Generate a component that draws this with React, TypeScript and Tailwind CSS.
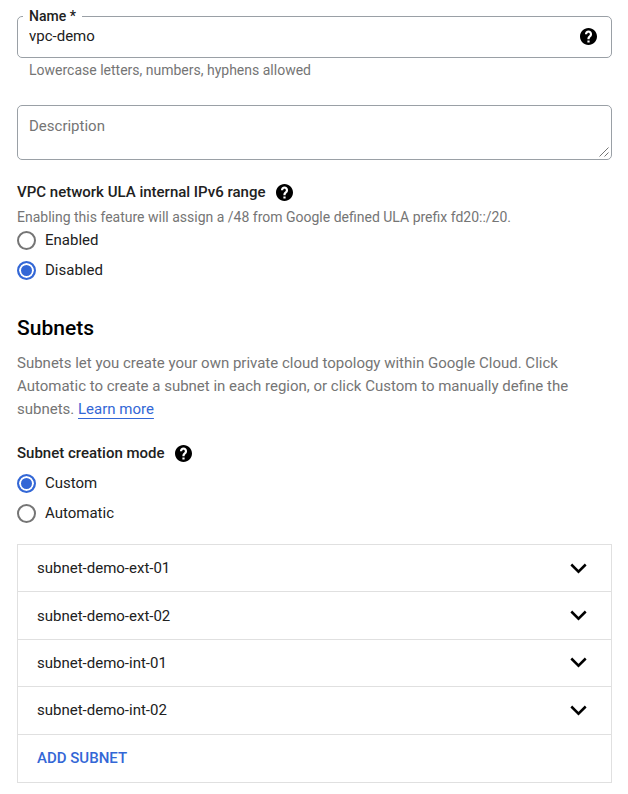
import { useState } from "react";

const subnets = [
  "subnet-demo-ext-01",
  "subnet-demo-ext-02",
  "subnet-demo-int-01",
  "subnet-demo-int-02",
];

function HelpButton({ label }: { label: string }) {
  return (
    <button type="button" aria-label={label} className="block shrink-0">
      <svg viewBox="2 2 20 20" className="block size-[17px]" fill="#000">
        <path d="M12 2C6.48 2 2 6.48 2 12s4.48 10 10 10 10-4.48 10-10S17.52 2 12 2zm1.3 17.2h-2.6v-2.4h2.6v2.4zm2.2-7.6l-.9.92C13.8 13.3 13.3 13.8 13.3 15.2h-2.6v-.7c0-1.1.45-2.1 1.17-2.83l1.24-1.26c.3-.3.5-.7.5-1.2 0-.9-.7-1.6-1.6-1.6s-1.6.7-1.6 1.6H7.8c0-2.3 1.9-4.2 4.2-4.2s4.2 1.9 4.2 4.2c0 .88-.3 1.8-.7 2.4z" />
      </svg>
    </button>
  );
}

type RadioProps = {
  name: string;
  label: string;
  checked: boolean;
  onSelect: () => void;
};

function Radio({ name, label, checked, onSelect }: RadioProps) {
  return (
    <label className="flex items-center gap-[9px] text-[15px] leading-5 text-[#212121]">
      <input
        type="radio"
        name={name}
        checked={checked}
        onChange={onSelect}
        className="size-[19px] shrink-0 appearance-none rounded-full border-2 border-[#757575] bg-white checked:border-[#3367d6] checked:bg-[#3367d6] checked:shadow-[inset_0_0_0_2px_#fff]"
      />
      {label}
    </label>
  );
}

export default function App() {
  const [ula, setUla] = useState("Disabled");
  const [mode, setMode] = useState("Custom");

  return (
    <main className="bg-white pt-[7px] pr-4 pb-3 pl-[17px] font-[Roboto,sans-serif] text-[15px] leading-5 text-[#212121]">
      <fieldset className="min-w-0 rounded-[5px] border border-[#9aa0a6] pr-3.5 pb-2.5 pl-[5px]">
        <legend className="px-1.5 text-sm leading-[18px] font-medium">
          <label htmlFor="network-name">Name *</label>
        </legend>
        <div className="flex items-center pl-1.5">
          <input
            id="network-name"
            defaultValue="vpc-demo"
            className="h-[22px] min-w-0 flex-1 bg-transparent outline-none"
          />
          <HelpButton label="Help for name" />
        </div>
      </fieldset>
      <p className="mt-0.5 pl-3 text-sm leading-5 text-[#757575]">
        Lowercase letters, numbers, hyphens allowed
      </p>

      <div className="relative mt-[25px]">
        <textarea
          aria-label="Description"
          placeholder="Description"
          className="block h-[55px] w-full resize-none rounded-[5px] border border-[#9aa0a6] px-[11px] py-2.5 outline-none placeholder:text-[#757575]"
        />
        <svg viewBox="0 0 10 10" className="pointer-events-none absolute right-[3px] bottom-[3px] size-2.5" fill="none" stroke="#757575">
          <path d="M.5 9.5l9-9M5.5 9.5l4-4" />
        </svg>
      </div>

      <section className="mt-[22px]">
        <div className="flex items-center gap-2.5">
          <h3 className="font-medium">VPC network ULA internal IPv6 range</h3>
          <HelpButton label="Help for internal IPv6 range" />
        </div>
        <p className="mt-[5px] text-sm leading-5 text-[#757575]">
          Enabling this feature will assign a /48 from Google defined ULA prefix
          fd20::/20.
        </p>
        <div className="mt-[3px] flex flex-col gap-2.5">
          {["Enabled", "Disabled"].map((o) => (
            <Radio key={o} name="ula" label={o} checked={ula === o} onSelect={() => setUla(o)} />
          ))}
        </div>
      </section>

      <section className="mt-9">
        <h2 className="text-[21px] leading-6 font-medium text-black">Subnets</h2>
        <p className="mt-3 leading-[23px] text-[#757575]">
          Subnets let you create your own private cloud topology within Google
          Cloud. Click Automatic to create a subnet in each region, or click
          Custom to manually define the subnets.{" "}
          <a href="#learn-more" className="text-[#3367d6] underline decoration-1 underline-offset-4">
            Learn more
          </a>
        </p>

        <div className="mt-[22px] flex items-center gap-2.5">
          <h3 className="font-medium">Subnet creation mode</h3>
          <HelpButton label="Help for subnet creation mode" />
        </div>
        <div className="mt-2.5 flex flex-col gap-2.5">
          {["Custom", "Automatic"].map((o) => (
            <Radio key={o} name="mode" label={o} checked={mode === o} onSelect={() => setMode(o)} />
          ))}
        </div>

        <ul className="mt-[21px] grid min-h-[239px] auto-rows-fr divide-y divide-[#e0e0e0] border border-[#e0e0e0]">
          {subnets.map((name) => (
            <li key={name} className="flex">
              <button type="button" className="flex flex-1 items-center justify-between pr-6 pl-[19px] text-left">
                {name}
                <svg viewBox="0 0 17 11" className="h-[11px] w-[17px]" fill="none" stroke="#000" strokeWidth="2.5">
                  <path d="M1.3 1.5 8.5 8.7l7.2-7.2" />
                </svg>
              </button>
            </li>
          ))}
          <li className="flex">
            <button type="button" className="flex-1 pl-[19px] text-left font-medium text-[#3367d6]">
              ADD SUBNET
            </button>
          </li>
        </ul>
      </section>
    </main>
  );
}
